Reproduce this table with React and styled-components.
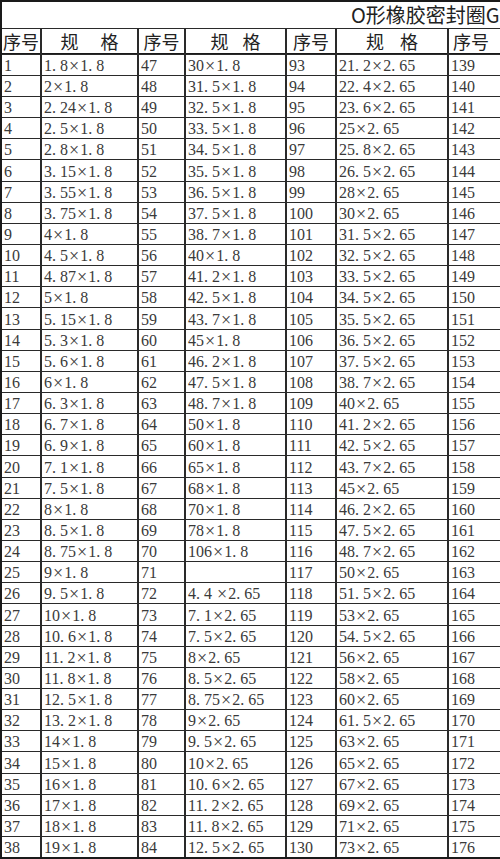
import React from "react";
import styled, { createGlobalStyle } from "styled-components";

const Global = createGlobalStyle`
  html, body { margin: 0; padding: 0; background: #ffffff; }
  body { overflow: hidden; }
`;

const Frame = styled.div`
  width: 500px;
  height: 859px;
  overflow: hidden;
  background: #8a8a8a;
`;

const Sheet = styled.div`
  display: grid;
  grid-template-columns: 38px 95px 45px 99px 48px 110px 80px;
  column-gap: 2px;
  row-gap: 1px;
  width: max-content;
  background: #2a2a2a;
  border-left: 2px solid #1a1a1a;
  border-top: 2px solid #1a1a1a;
  border-bottom: 2px solid #1a1a1a;
`;

const Title = styled.div`
  grid-column: 1 / -1;
  height: 26px;
  background: #fff;
  padding-left: 349px;
  display: flex;
  align-items: center;
  white-space: nowrap;
  overflow: hidden;
  font-family: "Noto Sans CJK SC", sans-serif;
  font-size: 20px;
  color: #222;
  line-height: 1;
`;

const Head = styled.div`
  height: 24px;
  background: #fff;
  border-bottom: 1px solid #1a1a1a;
  display: flex;
  align-items: center;
  justify-content: ${(p) => (p.$left ? "flex-start" : "center")};
  padding-left: ${(p) => (p.$left ? 4 : 0)}px;
  font-family: "Noto Sans CJK SC", sans-serif;
  font-size: 18px;
  color: #222;
  line-height: 1;
  white-space: pre;
  word-spacing: ${(p) => p.$spread || 0}px;
`;

const Cell = styled.div`
  height: ${(p) => p.$h}px;
  background: #fff;
  display: flex;
  align-items: center;
  padding: 2px 0 0 2px;
  box-sizing: border-box;
  font-family: "Liberation Serif", serif;
  font-size: 16px;
  color: #3a3a3a;
  white-space: pre;
  line-height: 1;
`;

const Dot = styled.span`
  margin-right: 4px;
`;

const Times = styled.span`
  font-size: 18px;
  line-height: 1;
  margin: 0 1px;
`;

const col2 = ["1.8","2","2.24","2.5","2.8","3.15","3.55","3.75","4","4.5","4.87","5","5.15","5.3","5.6","6","6.3","6.7","6.9","7.1","7.5","8","8.5","8.75","9","9.5","10","10.6","11.2","11.8","12.5","13.2","14","15","16","17","18","19"].map((v) => v + "×1.8");

const col4 = ["30","31.5","32.5","33.5","34.5","35.5","36.5","37.5","38.7","40","41.2","42.5","43.7","45","46.2","47.5","48.7","50","60","65","68","70","78","106"].map((v) => v + "×1.8")
  .concat([""])
  .concat(["4.4 ","7.1","7.5","8","8.5","8.75","9","9.5","10","10.6","11.2","11.8","12.5"].map((v) => v + "×2.65"));

const col6 = ["21.2","22.4","23.6","25","25.8","26.5","28","30","31.5","32.5","33.5","34.5","35.5","36.5","37.5","38.7","40","41.2","42.5","43.7","45","46.2","47.5","48.7","50","51.5","53","54.5","56","58","60","61.5","63","65","67","69","71","73"].map((v) => v + "×2.65");

const tall = new Set([5, 12, 19, 26, 33]);

function Spec({ text }) {
  const parts = [];
  let key = 0;
  for (const ch of text) {
    if (ch === ".") parts.push(<Dot key={key++}>.</Dot>);
    else if (ch === "×") parts.push(<Times key={key++}>×</Times>);
    else parts.push(ch);
  }
  return <>{parts}</>;
}

export default function App() {
  const heads = [
    { t: "序号" },
    { t: "规 格", s: 18 },
    { t: "序号" },
    { t: "规 格", s: 10 },
    { t: "序号" },
    { t: "规 格", s: 12 },
    { t: "序号", l: true },
  ];
  return (
    <>
      <Global />
      <Frame>
        <Sheet>
          <Title>O形橡胶密封圈G</Title>
          {heads.map((h, i) => (
            <Head key={"h" + i} $spread={h.s} $left={h.l}>{h.t}</Head>
          ))}
          {col2.map((_, i) => {
            const h = tall.has(i) ? 21 : 20;
            return (
              <React.Fragment key={i}>
                <Cell $h={h}>{i + 1}</Cell>
                <Cell $h={h}><Spec text={col2[i]} /></Cell>
                <Cell $h={h}>{i + 47}</Cell>
                <Cell $h={h}><Spec text={col4[i]} /></Cell>
                <Cell $h={h}>{i + 93}</Cell>
                <Cell $h={h}><Spec text={col6[i]} /></Cell>
                <Cell $h={h}>{i + 139}</Cell>
              </React.Fragment>
            );
          })}
        </Sheet>
      </Frame>
    </>
  );
}
